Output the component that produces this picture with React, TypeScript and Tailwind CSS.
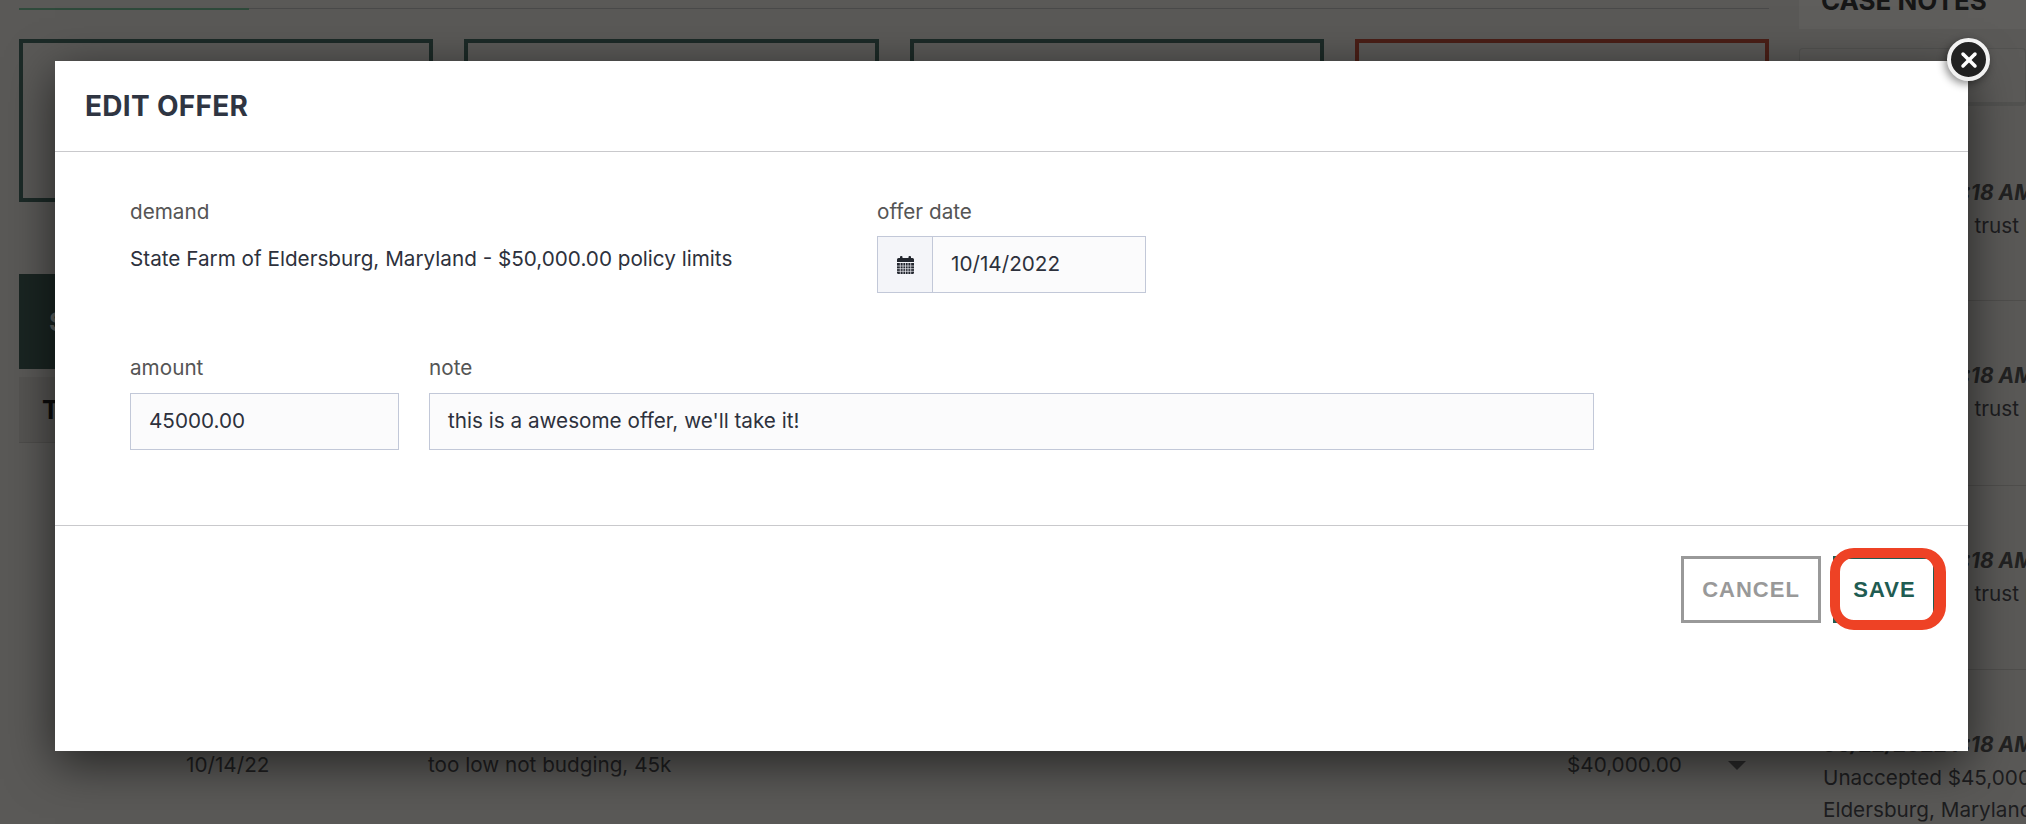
import { X } from "lucide-react";

const cards = ["border-[#1c2a27]", "border-[#1c2a27]", "border-[#1c2a27]", "border-[#4a1f17]"];
const notes = [
  { title: "Offer", date: "06/22/2022 7:18 AM", text: "Deposit held in trust per", text2: "" },
  { title: "Offer", date: "06/22/2022 7:18 AM", text: "Deposit held in trust per", text2: "" },
  { title: "Offer", date: "06/22/2022 7:18 AM", text: "Deposit held in trust per", text2: "" },
  { title: "Offer", date: "06/22/2022 7:18 AM", text: "Unaccepted $45,000.00 from", text2: "Eldersburg, Maryland" },
];

const CalendarIcon = () => (
  <svg width="17" height="18" viewBox="0 0 17 18" fill="#22262e">
    <rect x="3" y="0" width="2.5" height="3.5" rx="1" />
    <rect x="11.5" y="0" width="2.5" height="3.5" rx="1" />
    <path d="M1.5 2h14a1.5 1.5 0 0 1 1.5 1.5V6H0V3.500A1.500 1.500 0 0 1 1.500 2z" />
    <path
      fillRule="evenodd"
      d="M0 7h17v9.500a1.500 1.500 0 0 1-1.500 1.500h-14A1.500 1.500 0 0 1 0 16.500z"
    />
    <path
      d="M3.300 7v11M6 7v11M8.500 7v11M11 7v11M13.700 7v11M0 10h17M0 12.700h17M0 15.300h17"
      stroke="#f4f5f9"
      strokeWidth="0.7"
    />
  </svg>
);

const Background = () => (
  <div className="flex h-[824px] overflow-hidden bg-[#5a5957] text-[20.7px] text-[#1d1d1f]">
    <main className="ml-[19px] w-[1750px] shrink-0">
      <div className="mt-[8px] h-[1px] bg-[#4a4a4a]">
        <div className="h-[2px] w-[230px] bg-[#2f4a3b]" />
      </div>
      <div className="mt-[30px] grid grid-cols-4 gap-[31px]">
        {cards.map((c, i) => (
          <div key={i} className={`h-[163px] border-4 ${c}`} />
        ))}
      </div>
      <div className="mt-[72px] flex h-[95px] items-center bg-[#1a2522] pl-[30px] text-[26px] font-bold text-[#5f6461]">
        SETTLEMENT
      </div>
      <div className="mt-[8px] flex h-[66px] items-center border-b border-[#4e4d4b] bg-[#555452] pl-[23px] text-[26px] font-bold text-[#0c0c0c]">
        TYPE
      </div>
      <div className="mt-[310px] flex items-center pl-[167px] leading-[24px] text-[#1f1f21]">
        <span className="w-[242px]">10/14/22</span>
        <span>too low not budging, 45k</span>
        <span className="ml-auto w-[161px]">$40,000.00</span>
        <span className="mr-[23px] h-0 w-0 border-x-[9px] border-t-[9px] border-x-transparent border-t-[#2a2a2a]" />
      </div>
    </main>
    <aside className="ml-[30px] min-w-0 flex-1">
      <div className="h-[29px] overflow-hidden bg-[#5f5e5c] pl-[22px] text-[26px] font-bold text-[#161616]">
        <p className="-mt-[11px] leading-[24px] whitespace-nowrap">CASE NOTES</p>
      </div>
      <div className="mt-[19px] h-[58px] rounded-sm border border-b-4 border-[#525250] bg-[#5b5a58]" />
      {notes.map((n, i) => (
        <div
          key={i}
          className={`whitespace-nowrap border-b border-[#4f4e4c] pl-[24px] ${i === 0 ? "h-[195px] pt-[40px]" : "h-[184.5px] pt-[28px]"}`}
        >
          <p className="text-[20px] leading-[24px] font-bold italic text-[#222]">{n.title}</p>
          <p className="mt-[11px] text-[21px] leading-[24px] font-bold italic text-[#222]">{n.date}</p>
          <p className="mt-[5px] leading-[32px]">{n.text}</p>
          {n.text2 && <p className="leading-[32px]">{n.text2}</p>}
        </div>
      ))}
    </aside>
  </div>
);

const Modal = () => (
  <div className="absolute top-[61px] left-[55px] h-[690px] w-[1913px] bg-white text-[20.7px] shadow-[0_12px_45px_rgba(0,0,0,0.6)]">
    <button className="absolute -top-[23px] -right-[22px] z-10 flex h-[43px] w-[43px] items-center justify-center rounded-full border-4 border-[#f2f2f2] bg-[#222] text-white shadow-[-2px_3px_8px_rgba(0,0,0,0.45)]">
      <X size={24} strokeWidth={3.5} className="shrink-0" />
    </button>
    <header className="flex h-[91px] items-center border-b border-[#c9c9cc] pl-[30px]">
      <h2 className="-mt-[1px] text-[28px] font-bold tracking-[0.3px] text-[#2f3542]">EDIT OFFER</h2>
    </header>
    <section className="h-[374px] border-b border-[#c9c9cc] pt-[48px] pl-[75px] leading-[24px] text-[#2d313c]">
      <div className="flex">
        <div className="w-[747px]">
          <label className="block text-[#555]">demand</label>
          <p className="mt-[23px]">State Farm of Eldersburg, Maryland - $50,000.00 policy limits</p>
        </div>
        <div>
          <label className="block text-[#555]">offer date</label>
          <div className="mt-[12px] flex h-[57px] w-[269px] border border-[#c2c8d8] bg-[#fbfbfc]">
            <span className="flex w-[55px] items-center justify-center border-r border-[#c2c8d8] bg-[#f4f5f9]">
              <CalendarIcon />
            </span>
            <span className="flex items-center pb-[2px] pl-[18px]">10/14/2022</span>
          </div>
        </div>
      </div>
      <div className="mt-[63px] flex gap-[30px]">
        <div>
          <label className="block text-[#555]">amount</label>
          <div className="mt-[13px] flex h-[57px] w-[269px] items-center border border-[#c2c8d8] bg-[#fbfbfc] pb-[2px] pl-[18px]">
            45000.00
          </div>
        </div>
        <div>
          <label className="block text-[#555]">note</label>
          <div className="mt-[13px] flex h-[57px] w-[1165px] items-center border border-[#c2c8d8] bg-[#fbfbfc] pb-[2px] pl-[18px]">
            this is a awesome offer, we'll take it!
          </div>
        </div>
      </div>
    </section>
    <footer className="flex justify-end gap-[12px] pt-[30px] pr-[32px] font-['Liberation_Sans',sans-serif] text-[22px] font-bold tracking-[1px]">
      <button className="h-[67px] w-[140px] border-[3px] border-[#999] text-[#999]">CANCEL</button>
      <button className="relative h-[67px] w-[103px] border-[3px] border-[#1f5c52] text-[#1f5c52]">
        SAVE
        <span className="absolute -top-[11px] -right-[13px] -bottom-[10px] -left-[6px] rounded-[24px] border-[10px] border-r-[12px] border-[#ee4225]" />
      </button>
    </footer>
  </div>
);

export default function App() {
  return (
    <div className="relative h-[824px] overflow-hidden font-['Inter','Open_Sans',sans-serif]">
      <Background />
      <Modal />
    </div>
  );
}
